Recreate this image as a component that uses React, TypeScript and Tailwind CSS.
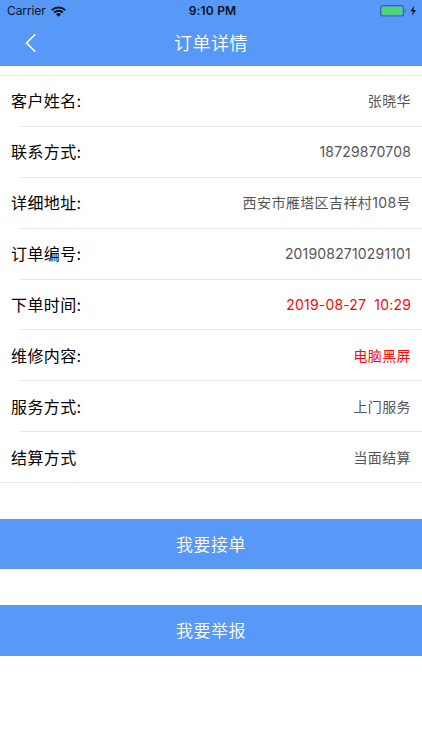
import clsx from "clsx";

type Row = {
  label: string;
  value: string;
  highlight?: boolean;
  numeric?: boolean;
};

const rows: Row[] = [
  { label: "客户姓名:", value: "张晓华" },
  { label: "联系方式:", value: "18729870708", numeric: true },
  { label: "详细地址:", value: "西安市雁塔区吉祥村108号" },
  { label: "订单编号:", value: "2019082710291101", numeric: true },
  { label: "下单时间:", value: "2019-08-27  10:29", highlight: true, numeric: true },
  { label: "维修内容:", value: "电脑黑屏", highlight: true },
  { label: "服务方式:", value: "上门服务" },
  { label: "结算方式", value: "当面结算" },
];

function WifiIcon() {
  return (
    <svg className="h-[11px] w-[15px]" viewBox="0 0 15 11" fill="none" stroke="#0b1320">
      <path d="M0.8 4.1a9.6 9.6 0 0 1 13.4 0" strokeWidth="2" />
      <path d="M3.1 6.5a6.3 6.3 0 0 1 8.8 0" strokeWidth="1.9" />
      <path d="M7.5 10.8 5 8.3a3.6 3.6 0 0 1 5 0z" fill="#0b1320" stroke="none" />
    </svg>
  );
}

function Battery() {
  return (
    <svg className="h-3 w-[38px]" viewBox="0 0 38 12">
      <rect x="0.6" y="0.6" width="23" height="10.4" rx="2.4" fill="none" stroke="#3767ac" strokeWidth="1.1" />
      <rect x="2" y="2" width="20.2" height="7.6" rx="1.2" fill="#4cd964" />
      <path d="M25 4.2c1.3.5 1.3 2.8 0 3.3z" fill="#3767ac" />
      <path d="M34.2 0.8 30.4 6.3h2.5l-1 4.5 4.2-5.9h-2.7z" fill="#0b1320" />
    </svg>
  );
}

// Status bar and title share the same blue background
function Header() {
  return (
    <header className="h-[65.5px] bg-[#5899f8]">
      <div className="grid h-[22px] grid-cols-3 items-center pr-1 pl-[7px] text-[12px] text-[#0b1320]">
        <div className="flex items-center gap-[5px]">
          <span className="tracking-[-0.1px]">Carrier</span>
          <WifiIcon />
        </div>
        <span className="text-center font-semibold tracking-[0.2px] whitespace-nowrap">9:10 PM</span>
        <div className="flex justify-end">
          <Battery />
        </div>
      </div>
      <div className="grid h-[42px] grid-cols-[60px_1fr_60px] items-center text-white">
        <button className="pl-[25px]" aria-label="返回">
          <svg className="h-5 w-3" viewBox="0 0 12 20" fill="none" stroke="currentColor" strokeWidth="1.5">
            <path d="M10.3 1.2 1.5 10l8.8 8.8" />
          </svg>
        </button>
        <h1 className="text-center text-[18px] font-[350] tracking-[0.5px]">订单详情</h1>
      </div>
    </header>
  );
}

function DetailRow({ label, value, highlight, numeric, last }: Row & { last: boolean }) {
  return (
    <li>
      <div className="flex h-[49.9px] items-center justify-between px-[11px] pt-px">
        <span className="text-[16px] tracking-[0.4px] text-black">{label}</span>
        <span
          className={clsx(
            "pb-px text-[14px] whitespace-pre",
            numeric ? "tracking-[0.17px]" : "tracking-[0.4px]",
            highlight ? "text-[#f60a0a]" : "text-[#555555]"
          )}
        >
          {value}
        </span>
      </div>
      <div className={clsx("h-px bg-[#e6e6e8]", !last && "ml-5")} />
    </li>
  );
}

function ActionButton({ children }: { children: string }) {
  return (
    <button className="block h-[50.5px] w-full bg-[#5899f8] pt-[3px] text-[17px] font-[350] tracking-[0.5px] text-white">
      {children}
    </button>
  );
}

export default function App() {
  return (
    <div className="min-h-[750px] w-full bg-white font-['Inter','Noto_Sans_CJK_SC',sans-serif]">
      <Header />
      <ul className="mt-[9.5px] border-t border-[#e9e9f1]">
        {rows.map((row, i) => (
          <DetailRow key={row.label} {...row} last={i === rows.length - 1} />
        ))}
      </ul>
      <div className="mt-[35.5px] flex flex-col gap-9">
        <ActionButton>我要接单</ActionButton>
        <ActionButton>我要举报</ActionButton>
      </div>
    </div>
  );
}
